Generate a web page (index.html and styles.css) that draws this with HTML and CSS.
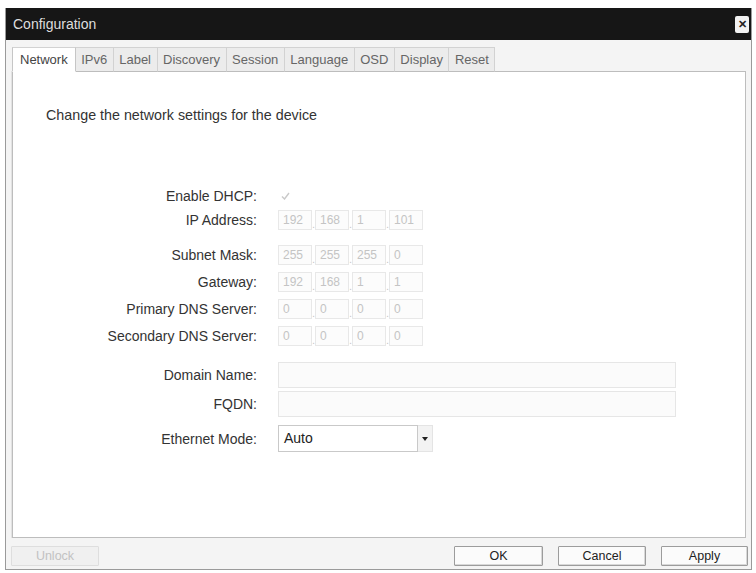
FILE: index.html
```html
<!DOCTYPE html>
<html>
<head>
<meta charset="utf-8">
<link rel="stylesheet" href="styles.css">
</head>
<body>
<div class="window">
  <div class="titlebar">
    <span class="title">Configuration</span>
    <span class="close">&#x2715;</span>
  </div>
  <div class="body">
    <div class="tabs">
      <div class="tab active">Network</div>
      <div class="tab">IPv6</div>
      <div class="tab">Label</div>
      <div class="tab">Discovery</div>
      <div class="tab">Session</div>
      <div class="tab">Language</div>
      <div class="tab">OSD</div>
      <div class="tab">Display</div>
      <div class="tab">Reset</div>
    </div>
    <div class="panel">
      <p class="desc">Change the network settings for the device</p>
      <div class="form">
        <div class="row">
          <label>Enable DHCP:</label>
          <div class="field"><svg class="check" width="9" height="8" viewBox="0 0 9 8"><path d="M1 4.5 L3.5 7 L8 1" fill="none" stroke="#c9c9c9" stroke-width="1.4"/></svg></div>
        </div>
        <div class="row">
          <label>IP Address:</label>
          <div class="field ip"><span class="oct">192</span><span class="dot">.</span><span class="oct">168</span><span class="dot">.</span><span class="oct">1</span><span class="dot">.</span><span class="oct">101</span></div>
        </div>
        <div class="row gap-md">
          <label>Subnet Mask:</label>
          <div class="field ip"><span class="oct">255</span><span class="dot">.</span><span class="oct">255</span><span class="dot">.</span><span class="oct">255</span><span class="dot">.</span><span class="oct">0</span></div>
        </div>
        <div class="row gap-sm">
          <label>Gateway:</label>
          <div class="field ip"><span class="oct">192</span><span class="dot">.</span><span class="oct">168</span><span class="dot">.</span><span class="oct">1</span><span class="dot">.</span><span class="oct">1</span></div>
        </div>
        <div class="row gap-sm">
          <label>Primary DNS Server:</label>
          <div class="field ip"><span class="oct">0</span><span class="dot">.</span><span class="oct">0</span><span class="dot">.</span><span class="oct">0</span><span class="dot">.</span><span class="oct">0</span></div>
        </div>
        <div class="row gap-sm">
          <label>Secondary DNS Server:</label>
          <div class="field ip"><span class="oct">0</span><span class="dot">.</span><span class="oct">0</span><span class="dot">.</span><span class="oct">0</span><span class="dot">.</span><span class="oct">0</span></div>
        </div>
        <div class="row tall gap-lg">
          <label>Domain Name:</label>
          <div class="field"><span class="text-input"></span></div>
        </div>
        <div class="row tall gap-xs">
          <label>FQDN:</label>
          <div class="field"><span class="text-input"></span></div>
        </div>
        <div class="row tall gap-sel">
          <label>Ethernet Mode:</label>
          <div class="field"><span class="select"><span class="sel-val">Auto</span><span class="sel-arrow"><svg width="6" height="4" viewBox="0 0 6 4"><path d="M0 0 H6 L3 4 Z" fill="#222"/></svg></span></span></div>
        </div>
      </div>
    </div>
    <div class="footer">
      <button class="btn disabled">Unlock</button>
      <div class="spacer"></div>
      <button class="btn ok">OK</button>
      <button class="btn cancel">Cancel</button>
      <button class="btn apply">Apply</button>
    </div>
  </div>
</div>
</body>
</html>
```
FILE: styles.css
```css
* { box-sizing: border-box; }
html, body { margin: 0; padding: 0; background: #fff; }
body {
  font-family: "Liberation Sans", Arial, sans-serif;
  color: #333;
}
.window {
  margin: 8px 4px 0 5px;
  width: 747px;
  height: 562px;
  border: 1px solid #9a9a9a;
  border-top: none;
  display: flex;
  flex-direction: column;
  background: #f4f4f4;
}
.titlebar {
  height: 32px;
  background: #161616;
  display: flex;
  align-items: center;
  justify-content: space-between;
  padding: 0 2px 0 7px;
}
.title {
  color: #dedede;
  font-size: 14px;
}
.close {
  width: 14px;
  height: 17px;
  background: #f2f2f2;
  border-radius: 2px;
  color: #222;
  font-size: 11px;
  font-weight: bold;
  display: flex;
  align-items: center;
  justify-content: center;
}
.body {
  flex: 1;
  display: flex;
  flex-direction: column;
  padding: 7px 5px 0 6px;
}
.tabs {
  display: flex;
  height: 25px;
  position: relative;
  z-index: 1;
}
.tab {
  height: 25px;
  padding: 0 5.5px;
  font-size: 13px;
  line-height: 23px;
  color: #666;
  background: #ececec;
  border: 1px solid #d2d2d2;
  border-left: none;
  border-bottom: 1px solid #bdbdbd;
}
.tab.active {
  background: #fff;
  color: #444;
  border-left: 1px solid #c6c6c6;
  border-right: 1px solid #c6c6c6;
  border-bottom-color: #fff;
  padding: 0 7px;
}
.panel {
  height: 467px;
  margin-top: -1px;
  background: #fff;
  border: 1px solid #bdbdbd;
  box-shadow: -1px 0 0 #e2e2e2;
  padding: 35px 0 0 0;
}
.desc {
  margin: 0 0 0 33px;
  font-size: 14.3px;
  line-height: 16px;
  color: #333;
}
.form {
  margin-top: 61px;
  display: flex;
  flex-direction: column;
}
.row {
  display: grid;
  grid-template-columns: 244px 1fr;
  column-gap: 21px;
  height: 24px;
  align-items: center;
}
.row.tall { height: 27px; }
.gap-md { margin-top: 11px; }
.gap-sm { margin-top: 3px; }
.gap-lg { margin-top: 13px; }
.gap-xs { margin-top: 2px; }
.gap-sel { margin-top: 8px; }
label {
  text-align: right;
  font-size: 14px;
  color: #333;
}
.field {
  display: flex;
  align-items: center;
}
.check { margin-left: 3px; }
.ip { align-items: flex-end; }
.oct {
  width: 34px;
  height: 20px;
  border: 1px solid #e8e8e8;
  background: #fcfcfc;
  font-size: 12px;
  line-height: 18px;
  color: #c4c4c4;
  padding-left: 4px;
}
.dot {
  width: 3px;
  font-size: 11px;
  line-height: 12px;
  color: #c8c8c8;
  text-align: center;
}
.text-input {
  width: 398px;
  height: 26px;
  border: 1px solid #e6e6e6;
  background: #fbfbfb;
}
.select {
  display: flex;
  width: 155px;
  height: 27px;
}
.sel-val {
  width: 140px;
  border: 1px solid #c9c9c9;
  background: #fff;
  font-size: 14px;
  color: #222;
  line-height: 25px;
  padding-left: 5px;
}
.sel-arrow {
  width: 15px;
  border: 1px solid #e4e4e4;
  border-left: none;
  background: #f3f3f3;
  display: flex;
  align-items: center;
  justify-content: center;
}
.footer {
  height: 31px;
  display: flex;
  align-items: flex-start;
  padding-top: 8px;
  gap: 15px;
  margin-left: -1px;
  margin-right: -2px;
}
.spacer { flex: 1; }
.btn {
  font-family: "Liberation Sans", Arial, sans-serif;
  width: 88px;
  height: 20px;
  padding: 0;
  font-size: 12.5px;
  color: #222;
  background: #fbfbfb;
  border: 1px solid #9c9c9c;
  border-radius: 1px;
  box-shadow: inset -1px -1px 0 #d8d8d8;
}
.btn.ok { width: 89px; }
.btn.apply { width: 87px; }
.btn.disabled {
  color: #c2c2c2;
  background: #f0f0f0;
  border-color: #dedede;
  box-shadow: none;
}
```
